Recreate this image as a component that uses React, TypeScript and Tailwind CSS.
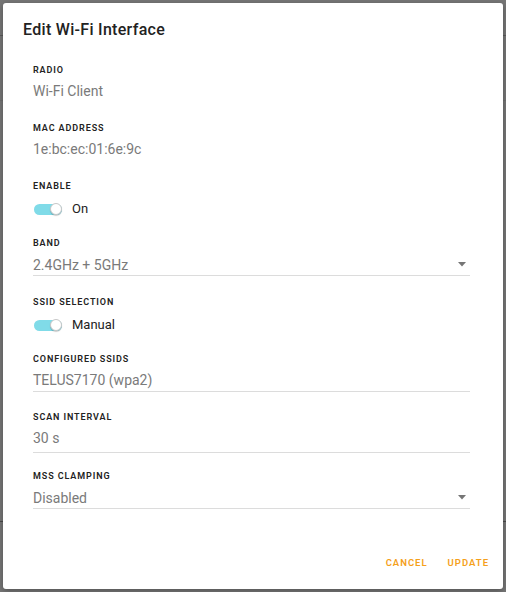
import React from "react";

const font = { fontFamily: "Roboto, 'Liberation Sans', sans-serif" };

function Label({ children }: { children: React.ReactNode }) {
  return (
    <div className="h-[12px] leading-[12px] text-[9px] font-semibold tracking-[0.9px] text-[#222] uppercase">
      {children}
    </div>
  );
}

function Value({ children }: { children: React.ReactNode }) {
  return <div className="h-[20px] leading-[20px] text-[14px] text-[#7a7a7a]">{children}</div>;
}

function Switch({ label }: { label: string }) {
  return (
    <div className="flex items-center h-[20px]">
      <div className="relative ml-[1px] w-[28px] h-[11px] rounded-full bg-[#80dbe8]">
        <div className="absolute right-[0px] top-[-0.5px] w-[12px] h-[12px] rounded-full bg-white border border-[#c8c8c8] shadow-[0_1px_1px_rgba(0,0,0,0.2)]" />
      </div>
      <span className="ml-[10px] text-[13px] text-[#222]">{label}</span>
    </div>
  );
}

function Arrow() {
  return (
    <svg width="8" height="5" viewBox="0 0 8 5" className="mr-[4px]">
      <polygon points="0,0 8,0 4,4.5" fill="#757575" />
    </svg>
  );
}

export default function App() {
  return (
    <div className="relative w-[506px] h-[592px] bg-[#767676] overflow-hidden" style={font}>
      <div className="absolute left-0 right-0 top-[35px] h-px bg-[#5a5a5a]" />
      <div className="absolute left-0 right-0 top-[521px] h-px bg-[#4a4a4a]" />
      <div className="absolute left-0 right-0 top-[100px] h-px bg-[#6e6e6e]" />
      <div className="absolute left-[3px] top-[3px] w-[500px] h-[586px] bg-white rounded-[3px] shadow-[0_2px_6px_rgba(0,0,0,0.3)] flex flex-col">
        <div className="pl-[20px] pt-[17px] h-[37px] leading-[20px] text-[16px] tracking-[0.3px] font-medium text-[#222]">
          Edit Wi-Fi Interface
        </div>
        <div className="pl-[30px] pr-[33px] flex flex-col">
          <div className="mt-[24px]">
            <Label>Radio</Label>
            <div className="mt-[5px]"><Value>Wi-Fi Client</Value></div>
          </div>
          <div className="mt-[21px]">
            <Label>MAC Address</Label>
            <div className="mt-[5px]"><Value>1e:bc:ec:01:6e:9c</Value></div>
          </div>
          <div className="mt-[21px]">
            <Label>Enable</Label>
            <div className="mt-[7px]"><Switch label="On" /></div>
          </div>
          <div className="mt-[18px]">
            <Label>Band</Label>
            <div className="mt-[5px] flex items-center justify-between border-b border-[#dcdcdc] h-[22px]">
              <Value>2.4GHz + 5GHz</Value>
              <Arrow />
            </div>
          </div>
          <div className="mt-[20px]">
            <Label>SSID Selection</Label>
            <div className="mt-[7px]"><Switch label="Manual" /></div>
          </div>
          <div className="mt-[18px]">
            <Label>Configured SSIDs</Label>
            <div className="mt-[5px] border-b border-[#dcdcdc] h-[22px]">
              <Value>TELUS7170 (wpa2)</Value>
            </div>
          </div>
          <div className="mt-[19px]">
            <Label>Scan Interval</Label>
            <div className="mt-[5px] border-b border-[#dcdcdc] h-[25px]">
              <Value>30 s</Value>
            </div>
          </div>
          <div className="mt-[17px]">
            <Label>MSS Clamping</Label>
            <div className="mt-[5px] flex items-center justify-between border-b border-[#dcdcdc] h-[22px]">
              <Value>Disabled</Value>
              <Arrow />
            </div>
          </div>
        </div>
        <div className="flex-1" />
        <div className="flex justify-end items-center gap-[20px] pr-[14px] pb-[19px] text-[9.5px] font-semibold tracking-[1px] text-[#f5a01a]">
          <span>CANCEL</span>
          <span>UPDATE</span>
        </div>
      </div>
    </div>
  );
}
